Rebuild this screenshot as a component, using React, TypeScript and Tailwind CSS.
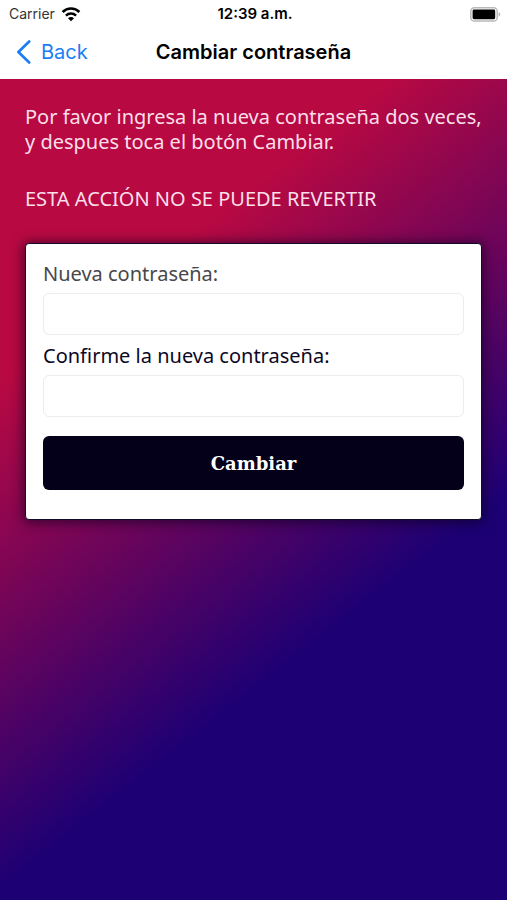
import { useState } from "react";

function WifiIcon() {
  return (
    <svg viewBox="0 0 20 15" className="h-[15px] w-5" aria-hidden="true">
      <path d="M1.6 5a12 12 0 0 1 16.8 0" fill="none" stroke="#000" strokeWidth="2.6" />
      <path d="M4.9 8.6a7.3 7.3 0 0 1 10.2 0" fill="none" stroke="#000" strokeWidth="2.4" />
      <path d="M10 14.2 7 11.3a4.2 4.2 0 0 1 6 0z" fill="#000" />
    </svg>
  );
}

function BatteryIcon() {
  return (
    <svg viewBox="0 0 31 15" className="h-[15px] w-[31px]" aria-hidden="true">
      <rect x="0.8" y="0.8" width="26.4" height="13.2" rx="3.6" fill="#fff" stroke="#b9b9b9" strokeWidth="1.5" />
      <rect x="2.6" y="2.6" width="22.6" height="9.6" rx="1.4" fill="#000" />
      <path d="M28.6 5.2c1.1.4 1.7 1.2 1.7 2.2s-.6 1.8-1.7 2.2z" fill="#b9b9b9" />
    </svg>
  );
}

function StatusBar() {
  return (
    <div className="grid grid-cols-3 items-center pl-[9px] pr-[6px] h-7">
      <div className="flex items-center gap-[6px] text-sm text-[#333]">
        <span>Carrier</span>
        <WifiIcon />
      </div>
      <span className="text-center text-[15px] font-semibold whitespace-nowrap">12:39 a.m.</span>
      <div className="flex justify-end"><BatteryIcon /></div>
    </div>
  );
}

function NavBar() {
  return (
    <nav className="grid grid-cols-[1fr_auto_1fr] items-center px-4 pb-[3px] h-[51px]">
      <button type="button" className="flex items-center gap-[10px] text-xl text-[#1a7ef5]">
        <svg viewBox="0 0 15 24" className="h-6 w-[15px]" aria-hidden="true">
          <path d="M13.2 1.5 2.4 12l10.8 10.5" fill="none" stroke="currentColor" strokeWidth="2.7" strokeLinecap="round" strokeLinejoin="round" />
        </svg>
        Back
      </button>
      <h1 className="text-xl font-semibold">Cambiar contraseña</h1>
    </nav>
  );
}

type FieldProps = { id: string; label: string; labelClass: string; value: string; onChange: (v: string) => void };

function PasswordField({ id, label, labelClass, value, onChange }: FieldProps) {
  return (
    <div>
      <label htmlFor={id} className={`block text-xl leading-8 ${labelClass}`}>{label}</label>
      <input
        id={id}
        type="password"
        value={value}
        onChange={(e) => onChange(e.target.value)}
        className="mt-[3px] block h-[42px] w-full rounded-md border border-[#ececec] bg-white px-3 text-xl"
      />
    </div>
  );
}

export default function App() {
  const [password, setPassword] = useState("");
  const [confirm, setConfirm] = useState("");

  return (
    <div className="flex min-h-screen flex-col bg-white font-['Inter',sans-serif] text-black">
      <header>
        <StatusBar />
        <NavBar />
      </header>
      <main className="flex-1 bg-[linear-gradient(142deg,#b80942_25%,#1c0074_67%)] px-[25px] pt-[25px] font-['Noto_Sans',sans-serif]">
        <div className="-mr-3 text-xl leading-[25px] text-[#fbdfe9]">
          <p>Por favor ingresa la nueva contraseña dos veces, y despues toca el botón Cambiar.</p>
          <p className="mt-8">ESTA ACCIÓN NO SE PUEDE REVERTIR</p>
        </div>
        <form
          onSubmit={(e) => e.preventDefault()}
          className="mt-8 flex flex-col gap-[5px] rounded-[4px] border border-[#140a2c] bg-white px-[17px] pt-[14px] pb-[29px] shadow-[0_1px_12px_2px_rgba(8,0,30,0.6)]"
        >
          <PasswordField id="password" label="Nueva contraseña:" labelClass="text-[#484848]" value={password} onChange={setPassword} />
          <PasswordField id="confirm" label="Confirme la nueva contraseña:" labelClass="text-[#0c0824]" value={confirm} onChange={setConfirm} />
          <button type="submit" className="mt-[14px] h-[54px] rounded-md bg-[#05001a] pt-[2px] font-['DejaVu_Serif',serif] text-lg font-bold text-white">
            Cambiar
          </button>
        </form>
      </main>
    </div>
  );
}
